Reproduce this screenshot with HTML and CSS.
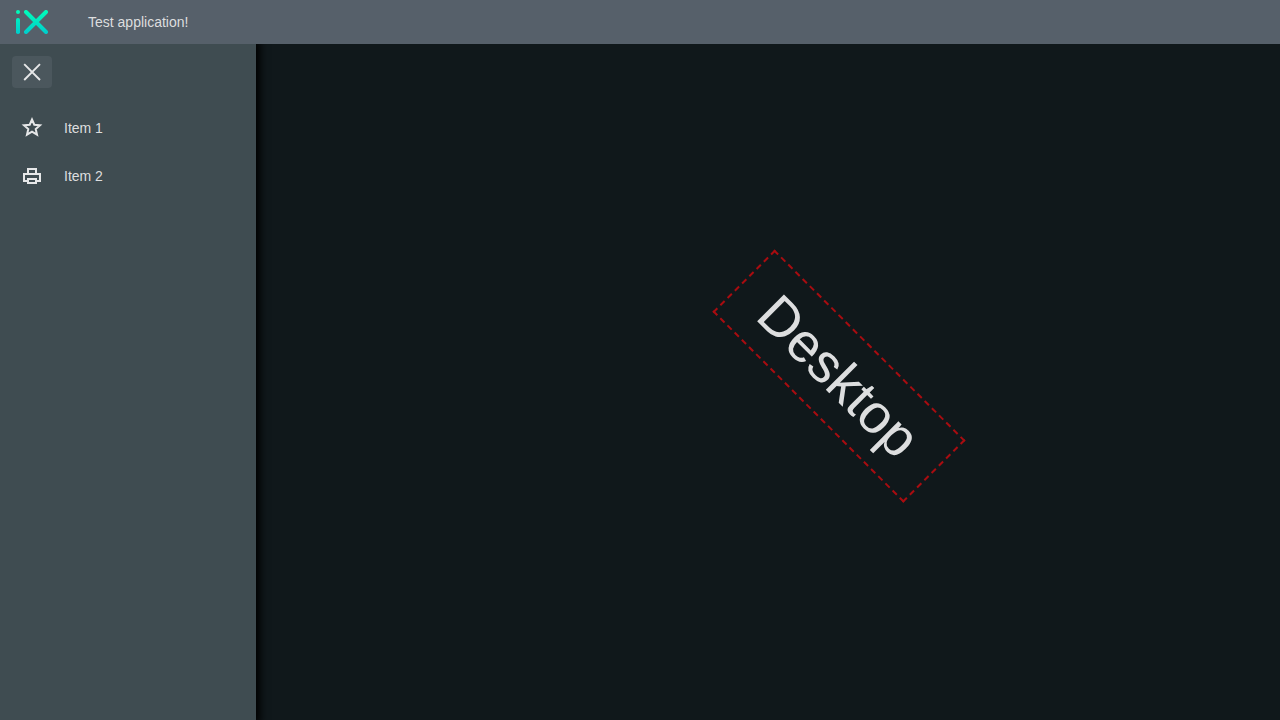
FILE: index.html
```html
<!DOCTYPE html>
<html lang="en">
<head>
<meta charset="utf-8">
<title>Test application!</title>
<link rel="stylesheet" href="styles.css">
</head>
<body>
<header class="header">
  <svg class="logo" viewBox="0 0 32 24" aria-hidden="true">
    <defs>
      <linearGradient id="brand" gradientUnits="userSpaceOnUse" x1="0" y1="0" x2="0" y2="24">
        <stop offset="0" stop-color="#00ffb9"/>
        <stop offset="1" stop-color="#00cccc"/>
      </linearGradient>
    </defs>
    <circle cx="2" cy="2" r="2" fill="url(#brand)"/>
    <path d="M10 2l20 20M30 2L10 22" fill="none" stroke="url(#brand)" stroke-width="4" stroke-linecap="round"/>
    <rect x="0" y="8" width="4" height="16" rx="1.8" fill="url(#brand)"/>
  </svg>
  <span class="title">Test application!</span>
</header>
<div class="body">
  <nav class="menu">
    <button class="toggle" type="button" aria-label="Close menu">
      <svg class="icon" viewBox="0 0 24 24" aria-hidden="true"><path d="M4.200 4.200l15.800 15.800M20 4.200L4.200 20" fill="none" stroke="currentColor" stroke-width="1.900"/></svg>
    </button>
    <a class="item" href="#">
      <svg class="icon" viewBox="0 0 24 24" aria-hidden="true"><path d="M12 3.500l2.300 5.200 5.700.5-4.300 3.800 1.300 5.600-5-3-5 3L8.300 13 4 9.200l5.700-.5z" fill="none" stroke="currentColor" stroke-width="2"/></svg>
      <span>Item 1</span>
    </a>
    <a class="item" href="#">
      <svg class="icon" viewBox="0 0 24 24" aria-hidden="true"><path d="M8 9V5h8v4M8 17H4v-7h16v7h-4M8 15h8v4H8z" fill="none" stroke="currentColor" stroke-width="2"/></svg>
      <span>Item 2</span>
    </a>
  </nav>
  <main class="content">
    <div class="stamp">Desktop</div>
  </main>
</div>
</body>
</html>
```
FILE: styles.css
```css
* { box-sizing: border-box; }

body {
  display: flex;
  flex-direction: column;
  min-height: 100vh;
  margin: 0;
  background: #10181b;
  color: #dddedf;
  font: 14px/20px "Liberation Sans", Arial, sans-serif;
}

.header {
  display: flex;
  align-items: center;
  gap: 40px;
  height: 44px;
  padding: 0 16px;
  background: #56606a;
}

.logo {
  width: 32px;
  height: 24px;
}

.body {
  display: flex;
  flex: 1;
}

.menu {
  display: flex;
  flex-direction: column;
  width: 256px;
  padding-top: 12px;
  background: #3f4c51;
  box-shadow: 0 0 8px 4px #000;
  clip-path: inset(0 -24px 0 0);
}

.toggle {
  display: flex;
  align-items: center;
  justify-content: center;
  width: 40px;
  height: 32px;
  margin: 0 12px 16px;
  padding: 0;
  border: 0;
  border-radius: 4px;
  background: #4b575d;
  color: inherit;
}

.icon {
  width: 24px;
  height: 24px;
  color: #e6e7e8;
}

.item {
  display: flex;
  align-items: center;
  gap: 20px;
  height: 48px;
  padding: 0 20px;
  color: inherit;
  text-decoration: none;
}

.content {
  display: flex;
  flex: 1;
  align-items: center;
  justify-content: center;
  padding: 0 0 12px 142px;
}

.stamp {
  padding: 10px 32px;
  border: 2px dashed #a80c10;
  font-size: 55px;
  line-height: 64px;
  transform: rotate(45deg);
}
```
